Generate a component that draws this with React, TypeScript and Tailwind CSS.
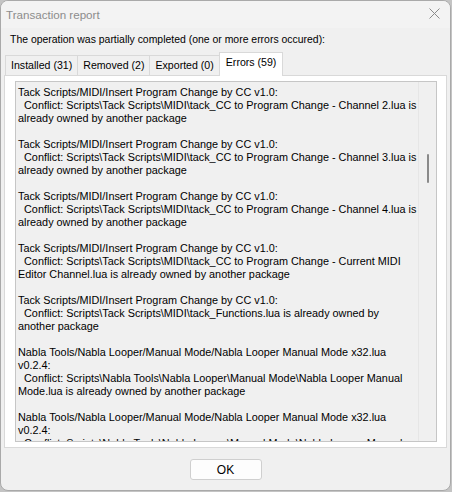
import React from "react";

const entries: string[][] = [
  [
    "Tack Scripts/MIDI/Insert Program Change by CC v1.0:",
    "  Conflict: Scripts\\Tack Scripts\\MIDI\\tack_CC to Program Change - Channel 2.lua is",
    "already owned by another package",
  ],
  [
    "Tack Scripts/MIDI/Insert Program Change by CC v1.0:",
    "  Conflict: Scripts\\Tack Scripts\\MIDI\\tack_CC to Program Change - Channel 3.lua is",
    "already owned by another package",
  ],
  [
    "Tack Scripts/MIDI/Insert Program Change by CC v1.0:",
    "  Conflict: Scripts\\Tack Scripts\\MIDI\\tack_CC to Program Change - Channel 4.lua is",
    "already owned by another package",
  ],
  [
    "Tack Scripts/MIDI/Insert Program Change by CC v1.0:",
    "  Conflict: Scripts\\Tack Scripts\\MIDI\\tack_CC to Program Change - Current MIDI",
    "Editor Channel.lua is already owned by another package",
  ],
  [
    "Tack Scripts/MIDI/Insert Program Change by CC v1.0:",
    "  Conflict: Scripts\\Tack Scripts\\MIDI\\tack_Functions.lua is already owned by",
    "another package",
  ],
  [
    "Nabla Tools/Nabla Looper/Manual Mode/Nabla Looper Manual Mode x32.lua",
    "v0.2.4:",
    "  Conflict: Scripts\\Nabla Tools\\Nabla Looper\\Manual Mode\\Nabla Looper Manual",
    "Mode.lua is already owned by another package",
  ],
  [
    "Nabla Tools/Nabla Looper/Manual Mode/Nabla Looper Manual Mode x32.lua",
    "v0.2.4:",
    "  Conflict: Scripts\\Nabla Tools\\Nabla Looper\\Manual Mode\\Nabla Looper Manual",
  ],
];

const tabs = ["Installed (31)", "Removed (2)", "Exported (0)"];

export default function App() {
  return (
    <div className="w-[452px] h-[492px] bg-[#c4c4c4] font-['Liberation_Sans',Arial,sans-serif] text-[11px] text-black">
      <div className="w-[451px] h-[491px] rounded-[8px] border border-[#a9a9a9] bg-[#f0f0f0] flex flex-col overflow-hidden">
        {/* Title bar */}
        <div className="h-[27px] flex items-center justify-between pl-[5px] pr-[10px] bg-[#f3f3f3]">
          <span className="text-[11.6px] text-[#8c8c8c]">Transaction report</span>
          <svg width="11" height="11" viewBox="0 0 11 11" className="mt-[-2px]">
            <path d="M0.5 0.5 L10.5 10.5 M10.5 0.5 L0.5 10.5" stroke="#8a8a8a" strokeWidth="1" />
          </svg>
        </div>

        <div className="pl-[9px] h-[24px] flex items-center text-[10.45px]">
          The operation was partially completed (one or more errors occured):
        </div>

        {/* Tabs */}
        <div className="flex items-end pl-[4px] h-[23px] relative z-10 text-[10.6px]">
          {tabs.map((t) => (
            <div
              key={t}
              className="h-[20px] px-[5px] flex items-center border border-b-0 border-[#d9d9d9] -ml-px first:ml-0 bg-[#f0f0f0]"
            >
              {t}
            </div>
          ))}
          <div className="h-[24px] px-[6px] flex items-center border border-b-0 border-[#d9d9d9] -ml-px bg-white pb-[3px] -mb-px">
            Errors (59)
          </div>
        </div>

        {/* Tab panel */}
        <div className="mx-[3px] h-[373px] border border-[#d9d9d9] bg-white pt-[5px] pb-[5px] pl-[10px] pr-[9px] flex">
          <div className="flex-1 border border-[#c6c6c6] bg-[#f0f0f0] flex overflow-hidden">
            <div className="flex-1 pl-[2px] pt-[4px] leading-[13px] text-[10.85px] whitespace-pre overflow-hidden">
              {entries.map((e, i) => (
                <div key={i} className="mb-[13px]">
                  {e.map((l, j) => (
                    <div key={j}>{l}</div>
                  ))}
                </div>
              ))}
            </div>
            <div className="w-[18px] border-l border-[#e6e6e6] bg-[#f0f0f0] flex justify-center pt-[72px] shrink-0">
              <div className="w-[2px] h-[29px] bg-[#8a8a8a] rounded-full ml-[1px]" />
            </div>
          </div>
        </div>

        {/* Footer */}
        <div className="flex-1 flex justify-center pt-[11px]">
          <button className="w-[72px] h-[21px] rounded-[3px] border border-[#cfcfcf] bg-[#fdfdfd] text-[12px] leading-none">
            OK
          </button>
        </div>
      </div>
    </div>
  );
}
